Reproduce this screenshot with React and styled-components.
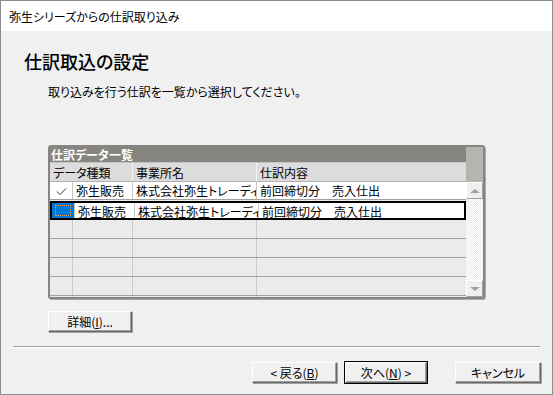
import styled, { createGlobalStyle } from "styled-components";

const GlobalStyle = createGlobalStyle`
  html, body {
    margin: 0;
    padding: 0;
    background: #f0f0f0;
  }
  body {
    font-family: "Noto Sans CJK JP", "Noto Sans", sans-serif;
    font-size: 12px;
    font-feature-settings: "palt";
    color: #000;
  }
`;

const rows = [
  { checked: true, type: "弥生販売", office: "株式会社弥生トレーディング", content: "前回締切分　売入仕出" },
  { selected: true, type: "弥生販売", office: "株式会社弥生トレーディング", content: "前回締切分　売入仕出" },
];

const App = () => {
  return (
    <>
      <GlobalStyle />
      <S.Window>
        <S.TitleBar>弥生シリーズからの仕訳取り込み</S.TitleBar>
        <S.Body>
          <S.Heading>仕訳取込の設定</S.Heading>
          <S.Lead>取り込みを行う仕訳を一覧から選択してください。</S.Lead>

          <S.Panel>
            <S.Main>
              <S.Caption>仕訳データ一覧</S.Caption>
              <S.HeaderRow>
                <S.HeadCell>データ種類</S.HeadCell>
                <S.HeadCell>事業所名</S.HeadCell>
                <S.HeadCell $last>仕訳内容</S.HeadCell>
              </S.HeaderRow>
              {rows.map((r, i) => (
                <S.Row key={i} $selected={r.selected}>
                  <S.CheckCell $selected={r.selected}>
                    {r.checked && (
                      <svg width="11" height="8" viewBox="0 0 11 8">
                        <path d="M1 3.5 L4 6.5 L10 0.5" fill="none" stroke="#333" strokeWidth="1" />
                      </svg>
                    )}
                    {r.selected && <S.Focus />}
                  </S.CheckCell>
                  <S.Cell>{r.type}</S.Cell>
                  <S.Cell>{r.office}</S.Cell>
                  <S.Cell $last>{r.content}</S.Cell>
                </S.Row>
              ))}
              {[0, 1, 2, 3, 4].map((i) => (
                <S.EmptyRow key={i} $short={i === 4}>
                  <S.EmptyCell />
                  <S.EmptyCell />
                  <S.EmptyCell />
                  <S.EmptyCell $last />
                </S.EmptyRow>
              ))}
            </S.Main>
            <S.Scroll>
              <S.ScrollCap />
              <S.ScrollBtn>
                <S.Arrow $up />
              </S.ScrollBtn>
              <S.Track />
              <S.ScrollBtn>
                <S.Arrow />
              </S.ScrollBtn>
            </S.Scroll>
          </S.Panel>

          <S.DetailRow>
            <S.Button $w={84}>
              詳細(<u>I</u>)...
            </S.Button>
          </S.DetailRow>
        </S.Body>

        <S.Separator />

        <S.Footer>
          <S.Button $w={85}>
            &lt; 戻る(<u>B</u>)
          </S.Button>
          <S.Button $w={82} $default>
            次へ(<u>N</u>) &gt;
          </S.Button>
          <S.Gap />
          <S.Button $w={86}>キャンセル</S.Button>
        </S.Footer>
      </S.Window>
    </>
  );
};

export default App;

const Window = styled.div`
  width: 553px;
  height: 395px;
  box-sizing: border-box;
  border: 1px solid #8c8c8c;
  display: flex;
  flex-direction: column;
  background: #f0f0f0;
  overflow: hidden;
`;

const TitleBar = styled.div`
  height: 30px;
  background: #fff;
  padding-left: 8px;
  display: flex;
  align-items: center;
  font-size: 12px;
  color: #000;
`;

const Body = styled.div`
  padding: 0 0 0 47px;
  display: flex;
  flex-direction: column;
`;

const Heading = styled.div`
  margin: 16px 0 0 -24px;
  font-size: 18px;
  font-weight: 500;
  line-height: 28px;
`;

const Lead = styled.div`
  margin-top: 9px;
  line-height: 16px;
  font-size: 12px;
`;

const Panel = styled.div`
  margin-top: 45px;
  width: 437px;
  height: 154px;
  box-sizing: border-box;
  border: 2px solid #868581;
  border-radius: 3px;
  box-shadow: 1px 1px 0 #a9a9a9;
  display: flex;
  overflow: hidden;
  background: #ebebeb;
`;

const Main = styled.div`
  flex: 1;
  display: flex;
  flex-direction: column;
  overflow: hidden;
`;

const Caption = styled.div`
  height: 15px;
  background: #878580;
  color: #fff;
  font-weight: 700;
  font-size: 12px;
  line-height: 15px;
  padding-left: 1px;
`;

const HeaderRow = styled.div`
  display: grid;
  grid-template-columns: 83px 124px 1fr;
  height: 20px;
  background: #dcdcdc;
  border-top: 1px solid #c4c4c4;
  box-sizing: border-box;
`;

const HeadCell = styled.div`
  padding-left: 3px;
  line-height: 19px;
  border-right: ${({ $last }) => ($last ? "none" : "1px solid #f4f4f4")};
  border-bottom: 1px solid #b0b0b0;
  white-space: nowrap;
  overflow: hidden;
`;

const Row = styled.div`
  display: grid;
  grid-template-columns: 23px 60px 124px 1fr;
  box-sizing: border-box;
  background: #fff;
  border: ${({ $selected }) => ($selected ? "2px solid #000" : "none")};
  border-bottom: ${({ $selected }) => ($selected ? "2px solid #000" : "1px solid #a0a0a0")};
  margin-bottom: ${({ $selected }) => ($selected ? "0" : "1px")};
  height: ${({ $selected }) => ($selected ? "19px" : "18px")};
`;

const CheckCell = styled.div`
  position: relative;
  background: ${({ $selected }) => ($selected ? "#0078d7" : "transparent")};
  border-right: 1px solid #c8c8c8;
  display: flex;
  align-items: center;
  justify-content: center;
  padding-top: 2px;
  box-sizing: border-box;
`;

const Focus = styled.div`
  position: absolute;
  inset: 2px 3px 2px 3px;
  border: 1px dotted #f7a03a;
`;

const Cell = styled.div`
  padding-left: 3px;
  padding-right: 1px;
  line-height: 17px;
  white-space: nowrap;
  overflow: hidden;
  min-width: 0;
  border-right: ${({ $last }) => ($last ? "none" : "1px solid #c8c8c8")};
`;

const EmptyRow = styled.div`
  display: grid;
  grid-template-columns: 23px 60px 124px 1fr;
  height: ${({ $short }) => ($short ? "8px" : "18px")};
  flex-shrink: 0;
  border-bottom: ${({ $short }) => ($short ? "none" : "1px solid #a0a0a0")};
  background: #ebebeb;
`;

const EmptyCell = styled.div`
  border-right: ${({ $last }) => ($last ? "none" : "1px solid #cacaca")};
`;

const Scroll = styled.div`
  width: 17px;
  display: flex;
  flex-direction: column;
`;

const ScrollCap = styled.div`
  height: 35px;
  background: #b6b4af;
`;

const ScrollBtn = styled.div`
  height: 17px;
  background: #f0f0f0;
  box-sizing: border-box;
  border: 1px solid;
  border-color: #fff #a0a0a0 #a0a0a0 #fff;
  display: flex;
  align-items: center;
  justify-content: center;
`;

const Arrow = styled.div`
  width: 0;
  height: 0;
  border-left: 5px solid transparent;
  border-right: 5px solid transparent;
  ${({ $up }) => ($up ? "border-bottom: 4px solid #a0a0a0;" : "border-top: 4px solid #a0a0a0;")}
`;

const Track = styled.div`
  flex: 1;
  background-color: #f4f4f4;
  background-image: repeating-conic-gradient(#ffffff 0 25%, #ececec 0 50%);
  background-size: 2px 2px;
`;

const DetailRow = styled.div`
  margin-top: 12px;
  display: flex;
`;

const Button = styled.button`
  width: ${({ $w }) => $w}px;
  height: 21px;
  flex-shrink: 0;
  box-sizing: border-box;
  background: #f0f0f0;
  font-family: inherit;
  font-size: 12px;
  font-feature-settings: "palt";
  color: #000;
  padding: 0;
  border: 1px solid;
  border-color: #fff #696969 #696969 #fff;
  box-shadow: ${({ $default }) =>
    $default ? "0 0 0 1px #000, inset -1px -1px 0 #a0a0a0" : "1px 1px 0 #a0a0a0, inset -1px -1px 0 #a0a0a0"};
  line-height: 18px;

  & u {
    text-decoration: underline;
  }
`;

const Separator = styled.div`
  margin: 14px 12px 0 12px;
  height: 2px;
  box-sizing: border-box;
  border-top: 1px solid #a0a0a0;
  border-bottom: 1px solid #fff;
`;

const Footer = styled.div`
  display: flex;
  padding: 14px 0 0 251px;
  gap: 8px;
`;

const Gap = styled.div`
  width: 12px;
  flex-shrink: 0;
`;

const S = {
  Window,
  TitleBar,
  Body,
  Heading,
  Lead,
  Panel,
  Main,
  Caption,
  HeaderRow,
  HeadCell,
  Row,
  CheckCell,
  Focus,
  Cell,
  EmptyRow,
  EmptyCell,
  Scroll,
  ScrollCap,
  ScrollBtn,
  Arrow,
  Track,
  DetailRow,
  Button,
  Separator,
  Footer,
  Gap,
};
